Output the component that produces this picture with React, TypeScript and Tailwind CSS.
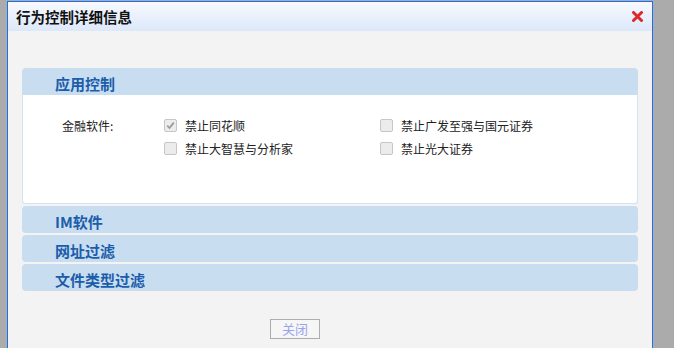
import React from 'react';

const font = { fontFamily: '"Noto Sans CJK SC", "Noto Sans", sans-serif' };

const Box = ({ checked }: { checked?: boolean }) => (
  <span className="w-[13px] h-[13px] rounded-[2px] border border-[#c6c6c6] bg-[#ececec] flex items-center justify-center shrink-0">
    {checked && (
      <svg width="9" height="9" viewBox="0 0 9 9">
        <path d="M1.2 4.6 L3.5 7 L7.8 1.6" fill="none" stroke="#9a9a9a" strokeWidth="1.8" />
      </svg>
    )}
  </span>
);

const Item = ({ label, checked }: { label: string; checked?: boolean }) => (
  <div className="flex items-center gap-[8px] h-[23px]">
    <Box checked={checked} />
    <span className="text-[12px] text-[#222]">{label}</span>
  </div>
);

const Bar = ({ title, top }: { title: string; top?: boolean }) => (
  <div
    className={`h-[27px] bg-[#c9ddf0] pl-[33px] pt-[5px] font-bold text-[15px] leading-[22px] text-[#1c5dab] ${
      top ? 'rounded-t-[4px]' : 'rounded-[4px]'
    }`}
  >
    {title}
  </div>
);

export default function App() {
  return (
    <div className="w-[674px] h-[348px] bg-[#ababab] pl-[7px] pt-[1px] overflow-hidden" style={font}>
      <div className="w-[646px] h-[360px] border border-[#1b6ff0] bg-[#f3f3f3]">
        <div className="h-[29px] bg-gradient-to-b from-[#f7f9fe] to-[#dce8fa] flex items-center justify-between pl-[8px] pr-[9px]">
          <span className="text-[14.5px] font-bold text-[#111]">行为控制详细信息</span>
          <svg width="11" height="11" viewBox="0 0 11 11">
            <path d="M1.5 1.5 L9.5 9.5 M9.5 1.5 L1.5 9.5" stroke="#e0262b" strokeWidth="3" strokeLinecap="round" />
          </svg>
        </div>
        <div className="px-[14px] pt-[37px]">
          <Bar title="应用控制" top />
          <div className="h-[109px] bg-white border-x border-b border-[#d3e3f3] rounded-b-[3px] flex pt-[19px]">
            <div className="w-[141px] pl-[39px] text-[12px] text-[#222] leading-[23px]">金融软件:</div>
            <div className="w-[216px]">
              <Item label="禁止同花顺" checked />
              <Item label="禁止大智慧与分析家" />
            </div>
            <div>
              <Item label="禁止广发至强与国元证券" />
              <Item label="禁止光大证券" />
            </div>
          </div>
          <div className="mt-[2px] flex flex-col gap-[2px]">
            <Bar title="IM软件" />
            <Bar title="网址过滤" />
            <Bar title="文件类型过滤" />
          </div>
          <div className="pl-[248px] pt-[24px]">
            <button className="w-[50px] h-[20px] border border-[#adadad] bg-[#f6f6f6] text-[13px] leading-[18px] text-[#9aa4ee]">
              关闭
            </button>
          </div>
        </div>
      </div>
    </div>
  );
}
